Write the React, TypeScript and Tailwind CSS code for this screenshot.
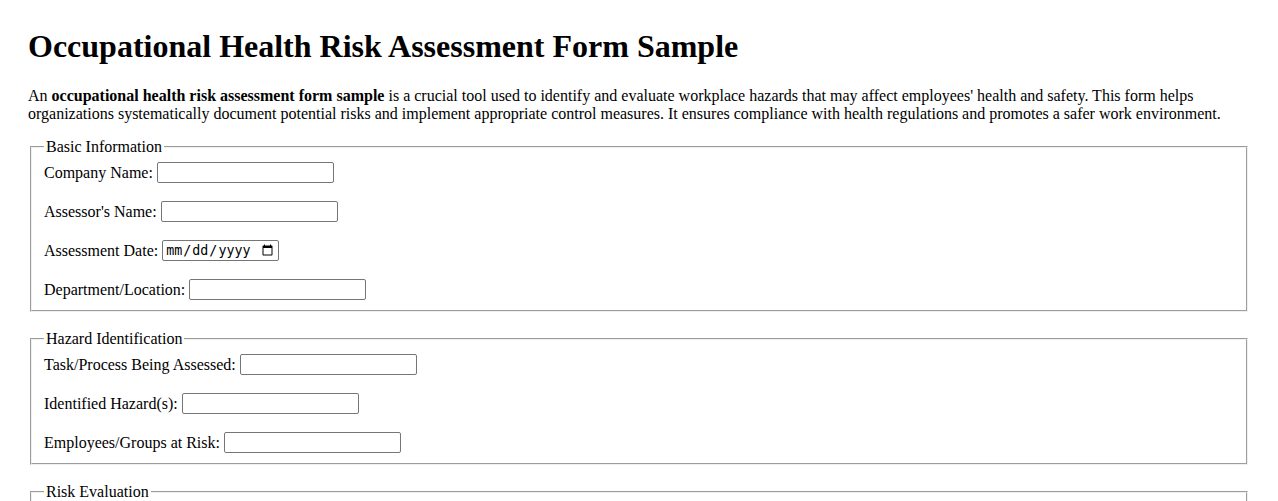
import React from "react";

type Field = { label: string; type?: string };

const sections: { title: string; fields: Field[] }[] = [
  {
    title: "Basic Information",
    fields: [
      { label: "Company Name:" },
      { label: "Assessor's Name:" },
      { label: "Assessment Date:", type: "date" },
      { label: "Department/Location:" },
    ],
  },
  {
    title: "Hazard Identification",
    fields: [
      { label: "Task/Process Being Assessed:" },
      { label: "Identified Hazard(s):" },
      { label: "Employees/Groups at Risk:" },
    ],
  },
  {
    title: "Risk Evaluation",
    fields: [
      { label: "Likelihood (1-5):" },
      { label: "Severity (1-5):" },
      { label: "Risk Rating:" },
    ],
  },
  {
    title: "Control Measures",
    fields: [
      { label: "Existing Controls:" },
      { label: "Additional Controls Required:" },
      { label: "Responsible Person:" },
      { label: "Target Completion Date:", type: "date" },
    ],
  },
];

function Row({ f }: { f: Field }) {
  return (
    <div className="flex items-center h-[21px] mb-[18px] last:mb-0">
      <label className="whitespace-nowrap">{f.label}</label>
      <span className="w-[4px]" />
      {f.type === "date" ? (
        <input
          type="date"
          className="h-[21px] w-[117px] border border-[#767676] rounded-[2px] px-[2px] bg-white text-black text-[13.33px] font-['DejaVu_Sans_Mono',monospace]"
        />
      ) : (
        <input
          type="text"
          className="h-[21px] w-[177px] border border-[#767676] rounded-[2px] px-[2px] bg-white text-[13.33px] font-['Liberation_Sans',sans-serif]"
        />
      )}
    </div>
  );
}

export default function App() {
  return (
    <div className="bg-white text-black font-['Liberation_Serif',serif] text-[16px] leading-[normal] p-[28px] min-h-screen">
      <h1 className="m-0 text-[32px] font-bold leading-[normal]">
        Occupational Health Risk Assessment Form Sample
      </h1>
      <p className="mt-[22px] mb-[15px]">
        An <strong className="font-bold">occupational health risk assessment form sample</strong> is a crucial tool
        used to identify and evaluate workplace hazards that may affect employees' health and safety. This form helps
        organizations systematically document potential risks and implement appropriate control measures. It ensures
        compliance with health regulations and promotes a safer work environment.
      </p>
      <form>
        {sections.map((s) => (
          <fieldset
            key={s.title}
            className="mx-[2px] mb-[18px] border-2 [border-style:groove] [border-color:#f0f0f0] px-3 pt-[6px] pb-[10px]"
          >
            <legend className="px-[2px]">{s.title}</legend>
            {s.fields.map((f) => (
              <Row key={f.label} f={f} />
            ))}
          </fieldset>
        ))}
      </form>
    </div>
  );
}
